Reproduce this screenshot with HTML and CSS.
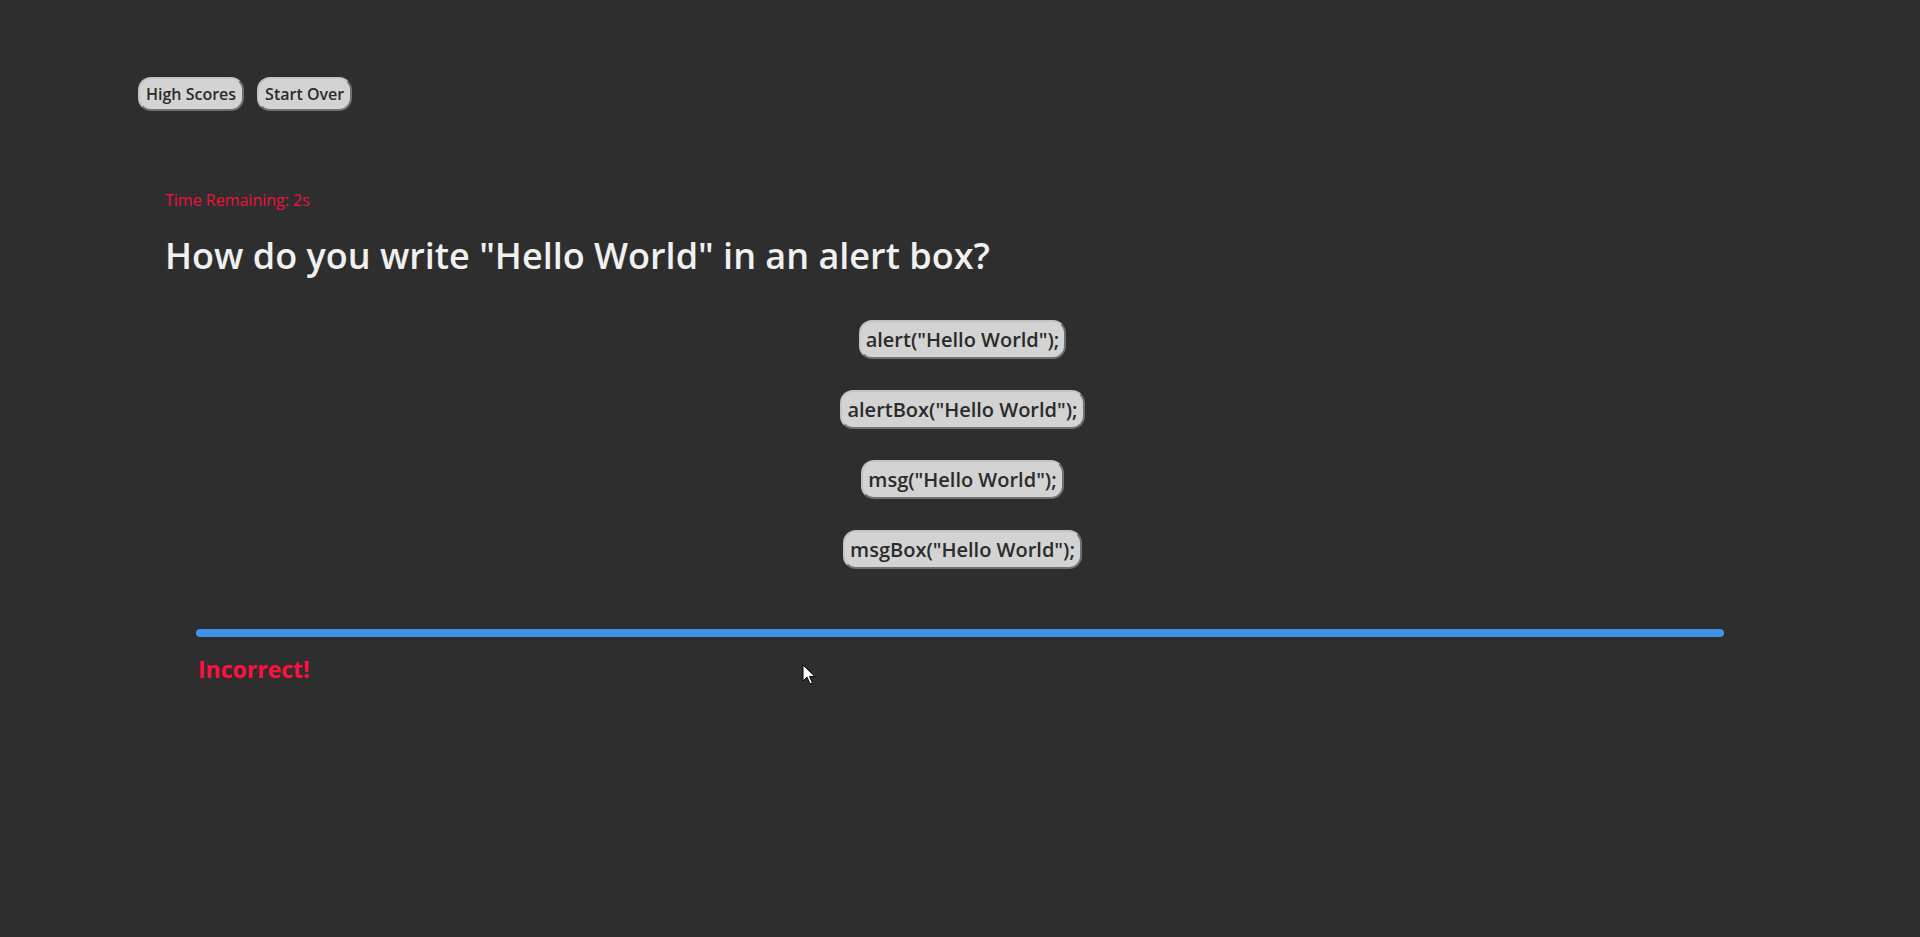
FILE: index.html
```html
<!DOCTYPE html>
<html lang="en">
<head>
<meta charset="utf-8">
<title>Code Quiz</title>
<link rel="stylesheet" href="styles.css">
</head>
<body>
<header class="topbar">
  <button class="nav-btn">High Scores</button>
  <button class="nav-btn">Start Over</button>
</header>
<main class="quiz">
  <p class="timer">Time Remaining: 2s</p>
  <h1 class="question">How do you write "Hello World" in an alert box?</h1>
  <div class="answers">
    <button class="answer">alert("Hello World");</button>
    <button class="answer">alertBox("Hello World");</button>
    <button class="answer">msg("Hello World");</button>
    <button class="answer">msgBox("Hello World");</button>
  </div>
  <div class="result">
    <hr class="divider">
    <p class="feedback">Incorrect!</p>
  </div>
</main>
<svg class="cursor" width="14" height="22" viewBox="0 0 14 22"><path d="M1 1 L1 17 L5 13 L8 20 L10.5 19 L7.5 12.5 L13 12.5 Z" fill="#fff" stroke="#000" stroke-width="1"/></svg>
</body>
</html>
```
FILE: styles.css
```css
html, body {
  margin: 0;
  padding: 0;
  background: #2e2e2e;
  min-height: 100%;
}
body {
  font-family: "Open Sans", "Noto Sans", sans-serif;
  height: 937px;
  position: relative;
  overflow: hidden;
}
.topbar {
  display: flex;
  gap: 13px;
  padding: 77px 0 0 138px;
}
.nav-btn {
  font-family: inherit;
  font-weight: 600;
  font-size: 16px;
  color: #2b2b2b;
  background: #d3d3d3;
  border: 2px outset #c4c4c4;
  border-radius: 13px;
  height: 34px;
  padding: 0 6px;
}
.quiz {
  padding: 0 0 0 165px;
  margin-top: 78px;
}
.timer {
  margin: 0;
  color: #f0103c;
  font-size: 16px;
  line-height: 22px;
}
.question {
  margin: 24px 0 0;
  color: #f0f0f0;
  font-size: 36px;
  line-height: 42px;
  font-weight: 600;
}
.answers {
  display: flex;
  flex-direction: column;
  align-items: center;
  gap: 31px;
  margin: 43px 0 0 -165px;
  padding-left: 5px;
}
.answer {
  font-family: inherit;
  font-weight: 600;
  font-size: 20px;
  color: #2b2b2b;
  background: #d3d3d3;
  border: 2px outset #c4c4c4;
  border-radius: 13px;
  height: 39px;
  padding: 0 5px;
}
.result {
  margin: 0 0 0 -165px;
  padding: 0 196px;
}
.divider {
  margin: 60px 0 0;
  height: 8px;
  border: 0;
  border-radius: 4px;
  background: #3f93e6;
}
.feedback {
  margin: 17px 0 0 2px;
  color: #ff1040;
  font-size: 23px;
  line-height: 30px;
  font-weight: 700;
}
.cursor {
  position: absolute;
  left: 802px;
  top: 664px;
}
```
